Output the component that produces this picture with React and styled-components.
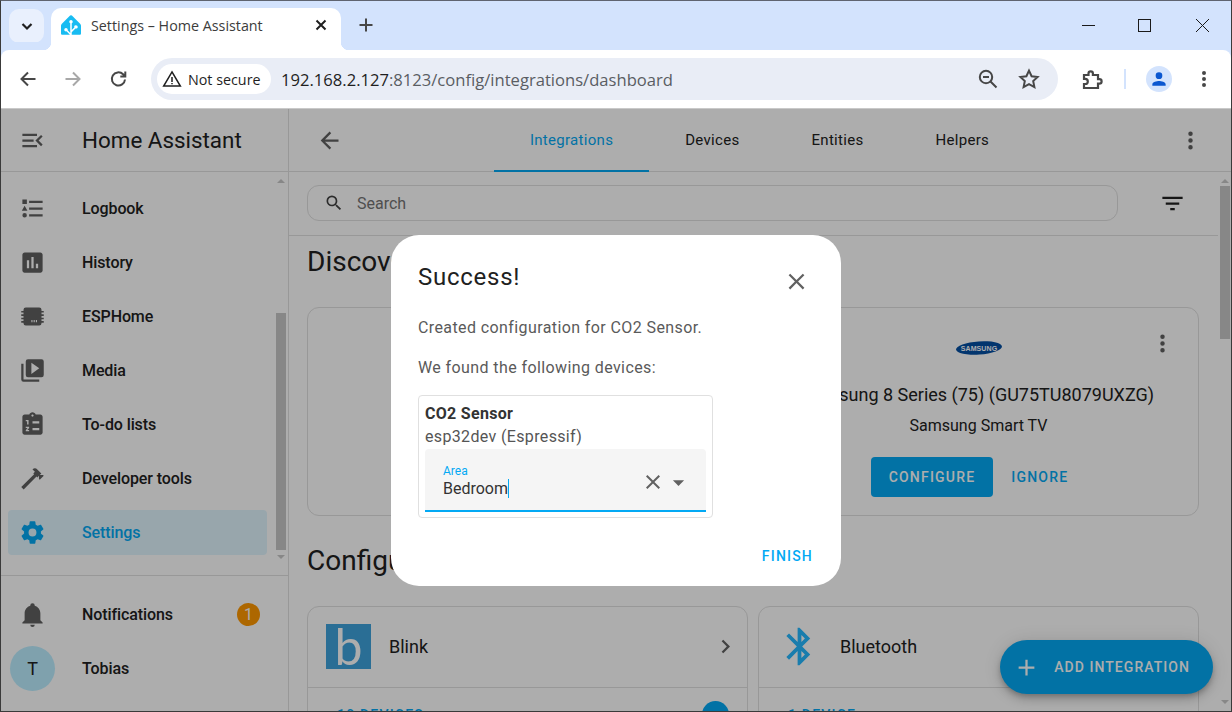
import React from 'react'
import styled, { createGlobalStyle } from 'styled-components'
import { SiHomeassistant } from 'react-icons/si'

const mdi = {
  menuOpen: 'M21,15.61L19.59,17L14.58,12L19.59,7L21,8.39L17.44,12L21,15.61M3,6H16V8H3V6M3,13V11H13V13H3M3,18V16H16V18H3Z',
  logbook: 'M5,9.5L7.5,14H2.5L5,9.5M3,4H7V8H3V4M5,20A2,2 0 0,0 7,18A2,2 0 0,0 5,16A2,2 0 0,0 3,18A2,2 0 0,0 5,20M9,5V7H21V5H9M9,19H21V17H9V19M9,13H21V11H9V13Z',
  history: 'M9 17H7V10H9V17M13 17H11V7H13V17M17 17H15V13H17V17M19 3H5C3.9 3 3 3.9 3 5V19C3 20.1 3.9 21 5 21H19C20.1 21 21 20.1 21 19V5C21 3.9 20.1 3 19 3Z',
  esphome: 'M6 4H18A2 2 0 0 1 20 6V7H22V8.5H20V10H22V11.5H20V13H22V14.5H20V16H22V17.5H20V18A2 2 0 0 1 18 20H6A2 2 0 0 1 4 18V17.5H2V16H4V14.5H2V13H4V11.5H2V10H4V8.5H2V7H4V6A2 2 0 0 1 6 4M11 15V17H12V15H11M13 15V17H14V15H13M15 15V17H16V15H15Z',
  media: 'M22,16V4A2,2 0 0,0 20,2H8A2,2 0 0,0 6,4V16A2,2 0 0,0 8,18H20A2,2 0 0,0 22,16M11,5L18,10L11,15V5M4,6H2V20A2,2 0 0,0 4,22H18V20H4V6Z',
  todo: 'M19 3H14.82C14.4 1.84 13.3 1 12 1S9.6 1.84 9.18 3H5C3.9 3 3 3.9 3 5V19C3 20.1 3.9 21 5 21H19C20.1 21 21 20.1 21 19V5C21 3.9 20.1 3 19 3M12 3C12.55 3 13 3.45 13 4S12.55 5 12 5 11 4.55 11 4 11.45 3 12 3M12 9H18V11H12V9M12 15H18V17H12V15M6 8H8.5V12H7.2V9.2H6V8M6 14H9V15L7.4 16.8H9V18H6V17L7.6 15.2H6V14Z',
  hammer: 'M2 19.63L13.43 8.2L12.72 7.5L14.14 6.07L12 3.89C13.2 2.7 15.09 2.7 16.27 3.89L19.87 7.5L18.45 8.91H21.29L22 9.62L18.45 13.21L17.74 12.5V9.62L16.27 11.04L15.56 10.33L4.13 21.76L2 19.63Z',
  cog: 'M12,15.5A3.5,3.5 0 0,1 8.5,12A3.5,3.5 0 0,1 12,8.5A3.5,3.5 0 0,1 15.5,12A3.5,3.5 0 0,1 12,15.5M19.43,12.97C19.47,12.65 19.5,12.33 19.5,12C19.5,11.67 19.47,11.34 19.43,11L21.54,9.37C21.73,9.22 21.78,8.95 21.66,8.73L19.66,5.27C19.54,5.05 19.27,4.96 19.05,5.05L16.56,6.05C16.04,5.66 15.5,5.32 14.87,5.07L14.5,2.42C14.46,2.18 14.25,2 14,2H10C9.75,2 9.54,2.18 9.5,2.42L9.13,5.07C8.5,5.32 7.96,5.66 7.44,6.05L4.95,5.05C4.73,4.96 4.46,5.05 4.34,5.27L2.34,8.73C2.21,8.95 2.27,9.22 2.46,9.37L4.57,11C4.53,11.34 4.5,11.67 4.5,12C4.5,12.33 4.53,12.65 4.57,12.97L2.46,14.63C2.27,14.78 2.21,15.05 2.34,15.27L4.34,18.73C4.46,18.95 4.73,19.03 4.95,18.95L7.44,17.94C7.96,18.34 8.5,18.68 9.13,18.93L9.5,21.58C9.54,21.82 9.75,22 10,22H14C14.25,22 14.46,21.82 14.5,21.58L14.87,18.93C15.5,18.67 16.04,18.34 16.56,17.94L19.05,18.95C19.27,19.03 19.54,18.95 19.66,18.73L21.66,15.27C21.78,15.05 21.73,14.78 21.54,14.63L19.43,12.97Z',
  bell: 'M21,19V20H3V19L5,17V11C5,7.9 7.03,5.17 10,4.29C10,4.19 10,4.1 10,4A2,2 0 0,1 12,2A2,2 0 0,1 14,4C14,4.1 14,4.19 14,4.29C16.97,5.17 19,7.9 19,11V17L21,19M14,21A2,2 0 0,1 12,23A2,2 0 0,1 10,21',
  back: 'M20,11V13H8L13.5,18.5L12.08,19.92L4.16,12L12.08,4.08L13.5,5.5L8,11H20Z',
  dots: 'M12,16A2,2 0 0,1 14,18A2,2 0 0,1 12,20A2,2 0 0,1 10,18A2,2 0 0,1 12,16M12,10A2,2 0 0,1 14,12A2,2 0 0,1 12,14A2,2 0 0,1 10,12A2,2 0 0,1 12,10M12,4A2,2 0 0,1 14,6A2,2 0 0,1 12,8A2,2 0 0,1 10,6A2,2 0 0,1 12,4Z',
  magnify: 'M9.5,3A6.5,6.5 0 0,1 16,9.5C16,11.11 15.41,12.59 14.44,13.73L14.71,14H15.5L20.5,19L19,20.5L14,15.5V14.71L13.73,14.44C12.59,15.41 11.11,16 9.5,16A6.5,6.5 0 0,1 3,9.5A6.5,6.5 0 0,1 9.5,3M9.5,5C7,5 5,7 5,9.5C5,12 7,14 9.5,14C12,14 14,12 14,9.5C14,7 12,5 9.5,5Z',
  filter: 'M6,13H18V11H6M3,6V8H21V6M10,18H14V16H10V18Z',
  close: 'M19,6.41L17.59,5L12,10.59L6.41,5L5,6.41L10.59,12L5,17.59L6.41,19L12,13.41L17.59,19L19,17.59L13.41,12L19,6.41Z',
  menuDown: 'M7,10L12,15L17,10H7Z',
  chevron: 'M8.59,16.58L13.17,12L8.59,7.41L10,6L16,12L10,18L8.59,16.58Z',
  plus: 'M19,13H13V19H11V13H5V11H11V5H13V11H19V13Z',
  bluetooth: 'M14.88,16.29L13,18.17V14.41M13,5.83L14.88,7.71L13,9.58M17.71,7.71L12,2H11V9.58L6.41,5L5,6.41L10.59,12L5,17.58L6.41,19L11,14.41V22H12L17.71,16.29L13.41,12L17.71,7.71Z',
}

//--Styles
const GlobalStyle = createGlobalStyle`
  html, body {
    margin: 0;
    height: 100%;
    overflow: hidden;
    background: #fff;
  }
  * {
    box-sizing: border-box;
  }
`
const Window = styled.div`
  width: 1232px;
  height: 712px;
  display: flex;
  flex-direction: column;
  overflow: hidden;
  border: 1px solid #3a3a3a;
  border-top-color: #5f6470;
  font-family: Roboto, sans-serif;
  color: #212121;
`
const Svg = styled.svg`
  display: block;
  flex: none;
  width: ${(p) => p.$size || 27}px;
  height: ${(p) => p.$size || 27}px;
  fill: ${(p) => p.$color || '#616161'};
`
const Icon = ({ d, size, color }) => (
  <Svg viewBox="0 0 24 24" $size={size} $color={color}>
    <path d={d} />
  </Svg>
)
const Line = styled.svg`
  display: block;
  flex: none;
  width: ${(p) => p.$size || 24}px;
  height: ${(p) => p.$size || 24}px;
  fill: none;
  stroke: ${(p) => p.$color || '#474747'};
  stroke-width: ${(p) => p.$weight || 2};
`

// browser chrome
const TabStrip = styled.div`
  height: 49px;
  flex: none;
  display: flex;
  align-items: flex-end;
  background: #d3e3fd;
  padding-left: 8px;
`
const TabMenu = styled.div`
  width: 35px;
  height: 34px;
  margin: 0 7px 7px 0;
  border-radius: 10px;
  background: #e9f0fd;
  display: flex;
  align-items: center;
  justify-content: center;
`
const Tab = styled.div`
  position: relative;
  width: 290px;
  height: 42px;
  background: #fff;
  border-radius: 10px 10px 0 0;
  display: flex;
  align-items: center;
  padding: 0 8px 8px 10px;
  &::before,
  &::after {
    content: '';
    position: absolute;
    bottom: 0;
    width: 8px;
    height: 8px;
  }
  &::before {
    left: -8px;
    background: radial-gradient(circle at 0 0, transparent 8px, #fff 8.5px);
  }
  &::after {
    right: -8px;
    background: radial-gradient(circle at 100% 0, transparent 8px, #fff 8.5px);
  }
`
const TabTitle = styled.span`
  flex: 1;
  margin-left: 10px;
  font: 14.3px 'Open Sans', sans-serif;
  color: #3c3c3c;
  white-space: nowrap;
`
const NewTab = styled.div`
  margin: 0 0 13px 13px;
`
const WindowControls = styled.div`
  margin: 0 1px 13px auto;
  display: flex;
`
const WindowControl = styled.div`
  width: 57px;
  display: flex;
  justify-content: center;
`
const ToolBar = styled.div`
  height: 59px;
  flex: none;
  display: flex;
  align-items: center;
  padding: 0 9px;
  background: #fff;
  border-bottom: 1px solid #c9c9c9;
  border-radius: 8px 8px 0 0;
  box-shadow: 0 -8px 0 #d3e3fd;
`
const NavButton = styled.div`
  width: 36px;
  height: 36px;
  flex: none;
  margin-right: ${(p) => p.$gap ?? 9}px;
  margin-left: ${(p) => p.$lead || 0}px;
  display: flex;
  align-items: center;
  justify-content: center;
`
const Omnibox = styled.div`
  width: 907px;
  height: 42px;
  flex: none;
  margin-left: 6px;
  padding: 0 17px 0 6px;
  border-radius: 21px;
  background: #e9edf6;
  display: flex;
  align-items: center;
`
const SecurityChip = styled.div`
  width: 114px;
  height: 30px;
  flex: none;
  border-radius: 15px;
  background: #fff;
  display: flex;
  align-items: center;
  gap: 6px;
  padding-left: 5px;
  font: 14.3px 'Open Sans', sans-serif;
  color: #1f1f1f;
  white-space: nowrap;
`
const Url = styled.div`
  flex: 1;
  margin-left: 10px;
  font: 16.6px 'Open Sans', sans-serif;
  color: #5a5d63;
  white-space: nowrap;
  b {
    font-weight: 400;
    color: #1f1f1f;
  }
`
const OmniIcon = styled.div`
  margin-left: 17px;
`
const Separator = styled.div`
  width: 2px;
  height: 20px;
  flex: none;
  margin: 0 20px 0 14px;
  background: #d3e3fd;
`
const Avatar = styled.div`
  width: 26px;
  height: 26px;
  flex: none;
  margin-right: 14px;
  border-radius: 50%;
  background: #d3e3fd;
  display: flex;
  align-items: center;
  justify-content: center;
`

// home assistant app
const AppArea = styled.div`
  position: relative;
  flex: 1;
  min-height: 0;
  display: flex;
  background: #fff;
`
const Sidebar = styled.aside`
  width: 288px;
  flex: none;
  display: flex;
  flex-direction: column;
  border-right: 1px solid #e0e0e0;
`
const SidebarHeader = styled.div`
  height: 63px;
  flex: none;
  display: flex;
  align-items: center;
  gap: 36px;
  padding-left: 18px;
  font-size: 22.4px;
  border-bottom: 1px solid #e0e0e0;
`
const SidebarMiddle = styled.div`
  height: 404px;
  flex: none;
  display: flex;
  border-bottom: 1px solid #e0e0e0;
`
const NavList = styled.nav`
  flex: 1;
  display: flex;
  flex-direction: column;
  gap: 9px;
  padding: 14px 0 0 7px;
`
const NavItem = styled.div`
  width: 259px;
  height: 45px;
  flex: none;
  display: flex;
  align-items: center;
  gap: 36px;
  padding: 0 7px 1px 11px;
  border-radius: 4px;
  font-size: 16px;
  font-weight: 500;
  letter-spacing: -0.1px;
  color: ${(p) => (p.$active ? '#03a9f4' : '#212121')};
  background: ${(p) => (p.$active ? 'rgba(3, 169, 244, 0.12)' : 'transparent')};
`
const SidebarBottom = styled.div`
  display: flex;
  flex-direction: column;
  gap: 9px;
  padding: 16px 0 0 7px;
`
const UserItem = styled(NavItem)`
  gap: 27px;
  padding-left: 2px;
`
const Badge = styled.span`
  margin-left: auto;
  width: 23px;
  height: 23px;
  border-radius: 50%;
  background: #ff9800;
  color: #fff;
  font-size: 16px;
  font-weight: 400;
  display: flex;
  align-items: center;
  justify-content: center;
`
const UserBadge = styled.div`
  width: 45px;
  height: 45px;
  border-radius: 50%;
  background: #bceeff;
  font-size: 18px;
  font-weight: 400;
  display: flex;
  align-items: center;
  justify-content: center;
`
const ScrollTrack = styled.div`
  width: ${(p) => p.$width}px;
  flex: none;
  display: flex;
  flex-direction: column;
  align-items: center;
  padding: 7px ${(p) => p.$right || 0}px ${(p) => p.$bottom || 7}px 0;
`
const ArrowUp = styled.div`
  width: 0;
  height: 0;
  border: 4px solid transparent;
  border-top: 0;
  border-bottom: 4px solid #c8c8c8;
`
const ArrowDown = styled.div`
  width: 0;
  height: 0;
  margin-top: auto;
  border: 4px solid transparent;
  border-bottom: 0;
  border-top: 4px solid #c8c8c8;
`
const ScrollThumb = styled.div`
  width: 10px;
  height: ${(p) => p.$height}px;
  margin-top: ${(p) => p.$top}px;
  background: #c8c8c8;
`
const Main = styled.main`
  flex: 1;
  min-width: 0;
  position: relative;
  display: flex;
  flex-direction: column;
`
const MainToolbar = styled.div`
  height: 63px;
  flex: none;
  display: grid;
  grid-template-columns: 1fr auto 1fr;
  align-items: center;
  padding: 0 28px 0 27px;
  border-bottom: 1px solid #e0e0e0;
`
const Tabs = styled.div`
  display: flex;
  align-self: stretch;
  margin-bottom: -1px;
`
const PageTab = styled.div`
  padding: 0 36px;
  display: flex;
  align-items: center;
  font-size: 15px;
  font-weight: 400;
  letter-spacing: 0.3px;
  color: ${(p) => (p.$active ? '#03a9f4' : '#212121')};
  border-bottom: 2px solid ${(p) => (p.$active ? '#03a9f4' : 'transparent')};
`
const EndSlot = styled.div`
  justify-self: end;
  margin-right: -1px;
`
const MainBody = styled.div`
  flex: 1;
  min-height: 0;
  display: flex;
`
const Scroller = styled.div`
  flex: 1;
  min-width: 0;
  overflow: hidden;
`
const SearchRow = styled.div`
  height: 64px;
  display: flex;
  align-items: center;
  padding: 0 0 1px 18px;
  border-bottom: 1px solid #e0e0e0;
`
const SearchBox = styled.div`
  width: 811px;
  height: 36px;
  display: flex;
  align-items: center;
  gap: 13px;
  padding-left: 16px;
  border: 1px solid #e0e0e0;
  border-radius: 12px;
  font-size: 16px;
  color: #757575;
`
const FilterButton = styled.div`
  margin-left: 41px;
`
const Content = styled.div`
  padding: 8px 19px 0 18px;
`
const SectionTitle = styled.h1`
  margin: 0 0 27px;
  font-size: 28px;
  line-height: 36px;
  font-weight: 400;
`
const CardGrid = styled.div`
  display: grid;
  grid-template-columns: 441px 441px;
  gap: 10px;
  margin-bottom: 27px;
`
const Card = styled.div`
  position: relative;
  border: 1px solid #e0e0e0;
  border-radius: 12px;
  background: #fff;
`
const DiscoveryCard = styled(Card)`
  height: 209px;
  display: flex;
  flex-direction: column;
  align-items: center;
  padding-top: 32px;
`
const CardMenu = styled.div`
  position: absolute;
  top: 22px;
  right: 22px;
`
const SamsungLogo = styled.svg`
  display: block;
  width: 46px;
  height: 16px;
  text {
    font: 700 7px 'Liberation Sans', sans-serif;
    fill: #fff;
    letter-spacing: 0.1px;
  }
`
const DeviceTitle = styled.div`
  margin-top: 27px;
  font-size: 18px;
  line-height: 24px;
  white-space: nowrap;
`
const DeviceSub = styled.div`
  margin-top: 7px;
  font-size: 16px;
  line-height: 24px;
`
const CardActions = styled.div`
  display: flex;
  margin-top: 19px;
`
const FilledButton = styled.div`
  height: 40px;
  padding: 0 18px;
  display: flex;
  align-items: center;
  border-radius: 4px;
  background: #03a9f4;
  color: #fff;
  font-size: 14px;
  font-weight: 500;
  letter-spacing: 1.2px;
`
const TextButton = styled(FilledButton)`
  background: none;
  color: #03a9f4;
`
const EntryHeader = styled.div`
  height: 81px;
  display: flex;
  align-items: center;
  gap: 18px;
  padding: 0 8px 1px 18px;
  border-bottom: 1px solid #e0e0e0;
  font-size: 18px;
`
const BlinkLogo = styled.div`
  width: 45px;
  height: 45px;
  flex: none;
  background: #3fa2dc;
  color: #fff;
  display: flex;
  align-items: center;
  justify-content: center;
  font: 50px/45px Lato, sans-serif;
`
const EntryName = styled.div`
  flex: 1;
`
const EntryFooter = styled.div`
  display: flex;
  align-items: flex-start;
  padding: 17px 18px 0 29px;
  color: #03a9f4;
  font-size: 14px;
  font-weight: 500;
  letter-spacing: 1.2px;
  line-height: 20px;
  height: 60px;
`
const CountBadge = styled.div`
  margin: -4px 0 0 auto;
  width: 27px;
  height: 27px;
  border-radius: 50%;
  background: #03a9f4;
`
const Fab = styled.div`
  position: absolute;
  right: 18px;
  bottom: 17px;
  height: 54px;
  display: flex;
  align-items: center;
  gap: 14px;
  padding: 0 23px 0 13px;
  border-radius: 27px;
  background: #03a9f4;
  color: #fff;
  font-size: 14px;
  font-weight: 500;
  letter-spacing: 1.05px;
  box-shadow: 0 3px 5px -1px rgba(0, 0, 0, 0.2), 0 6px 10px 0 rgba(0, 0, 0, 0.14), 0 1px 18px 0 rgba(0, 0, 0, 0.12);
`

// dialog
const Scrim = styled.div`
  position: absolute;
  inset: 0;
  background: rgba(0, 0, 0, 0.32);
  display: flex;
  align-items: center;
  justify-content: center;
`
const Dialog = styled.div`
  width: 450px;
  height: 351px;
  padding: 26px 28px 0 27px;
  border-radius: 28px;
  background: #fff;
`
const DialogHead = styled.div`
  height: 32px;
  display: flex;
  justify-content: space-between;
  align-items: flex-start;
  padding-right: 3px;
`
const DialogTitle = styled.h2`
  margin: 0;
  font-size: 24px;
  line-height: 32px;
  font-weight: 400;
  letter-spacing: 0.75px;
`
const DialogClose = styled.div`
  margin-top: 7px;
`
const DialogText = styled.p`
  margin: ${(p) => p.$top}px 0 0;
  font-size: 16px;
  line-height: 20px;
  letter-spacing: 0.4px;
  color: #5a5a5a;
`
const DeviceBox = styled.div`
  width: 295px;
  height: 123px;
  margin-top: 17px;
  padding: 6px 6px 5px;
  border: 1px solid #e0e0e0;
  border-radius: 4px;
`
const DeviceName = styled.div`
  font-size: 16px;
  font-weight: 700;
  line-height: 24px;
  letter-spacing: 0.3px;
  color: #333;
`
const DeviceModel = styled.div`
  margin-bottom: 2px;
  font-size: 16px;
  line-height: 21px;
  letter-spacing: 0.35px;
  color: #555;
`
const AreaField = styled.div`
  height: 63px;
  display: flex;
  padding: 0 14px 0 18px;
  background: #f5f5f5;
  border-radius: 4px 4px 0 0;
  border-bottom: 2px solid #03a9f4;
`
const AreaText = styled.div`
  flex: 1;
  padding-top: 15px;
`
const AreaLabel = styled.div`
  font-size: 12px;
  line-height: 14px;
  color: #03a9f4;
`
const AreaValue = styled.div`
  font-size: 16px;
  line-height: 20px;
  margin-top: 1px;
  color: #333;
  span {
    border-right: 1px solid #03a9f4;
  }
`
const AreaIcons = styled.div`
  display: flex;
  align-items: center;
  height: 27px;
  margin-top: 20px;
`
const DialogActions = styled.div`
  height: 36px;
  margin-top: 20px;
  display: flex;
  align-items: center;
  justify-content: flex-end;
  font-size: 14px;
  font-weight: 500;
  letter-spacing: 1.2px;
  color: #03a9f4;
`

const navItems = [
  ['Logbook', mdi.logbook],
  ['History', mdi.history],
  ['ESPHome', mdi.esphome],
  ['Media', mdi.media],
  ['To-do lists', mdi.todo],
  ['Developer tools', mdi.hammer],
]

const ChromeBar = () => (
  <>
    <TabStrip>
      <TabMenu>
        <Line viewBox="0 0 24 24" $color="#1f1f1f" $weight={2.2}>
          <path d="M7.5 10l4.5 4.5 4.5-4.5" />
        </Line>
      </TabMenu>
      <Tab>
        <SiHomeassistant size={20} color="#18bcf2" />
        <TabTitle>Settings – Home Assistant</TabTitle>
        <Line viewBox="0 0 24 24" $color="#1f1f1f" $weight={2}>
          <path d="M7.5 7.5l9 9M16.5 7.5l-9 9" />
        </Line>
      </Tab>
      <NewTab>
        <Line viewBox="0 0 24 24" $color="#474747" $weight={2}>
          <path d="M12 5.5v13M5.5 12h13" />
        </Line>
      </NewTab>
      <WindowControls>
        <WindowControl>
          <Line viewBox="0 0 24 24" $color="#1a1a1a" $weight={1}>
            <path d="M6 12.5h13" />
          </Line>
        </WindowControl>
        <WindowControl>
          <Line viewBox="0 0 24 24" $color="#1a1a1a" $weight={1}>
            <rect x="5.5" y="6.5" width="12" height="12" />
          </Line>
        </WindowControl>
        <WindowControl>
          <Line viewBox="0 0 24 24" $color="#1a1a1a" $weight={1}>
            <path d="M6 6l13 13M19 6L6 19" />
          </Line>
        </WindowControl>
      </WindowControls>
    </TabStrip>
    <ToolBar>
      <NavButton>
        <Line viewBox="0 0 24 24">
          <path d="M19.5 12H6M12 5.5L5.5 12l6.5 6.5" />
        </Line>
      </NavButton>
      <NavButton>
        <Line viewBox="0 0 24 24" $color="#a8a8a8">
          <path d="M4.5 12H18M12 5.5l6.5 6.5-6.5 6.5" />
        </Line>
      </NavButton>
      <NavButton>
        <Line viewBox="0 0 24 24">
          <path d="M19 12.5A6.6 6.6 0 1 1 17.1 7.3L19 9.2M19.3 4.6v5h-5" />
        </Line>
      </NavButton>
      <Omnibox>
        <SecurityChip>
          <Line viewBox="0 0 24 24" $size={20} $color="#1f1f1f" $weight={1.8}>
            <path d="M12 3.5L22 20.5H2L12 3.5ZM12 9.5v6M12 16.8v1.6" />
          </Line>
          Not secure
        </SecurityChip>
        <Url>
          <b>192.168.2.127</b>:8123/config/integrations/dashboard
        </Url>
        <OmniIcon>
          <Line viewBox="0 0 24 24" $weight={2}>
            <circle cx="10" cy="10" r="6.2" />
            <path d="M7 10h6M14.5 14.5l6 6" />
          </Line>
        </OmniIcon>
        <OmniIcon>
          <Line viewBox="0 0 24 24" $weight={2}>
            <path d="M12 3.6l2.6 5.6 6 .7-4.4 4.2 1.2 6L12 17.1l-5.4 3 1.2-6-4.4-4.2 6-.7L12 3.6Z" />
          </Line>
        </OmniIcon>
      </Omnibox>
      <NavButton $gap={0} $lead={16}>
        <Line viewBox="0 0 24 24" $weight={2.2}>
          <path d="M4 8h4.5V6.5a2.2 2.2 0 0 1 4.4 0V8H18v4.2h1.4a2.2 2.2 0 0 1 0 4.4H18V21H4v-4h1.2a2.6 2.6 0 0 0 0-5.2H4V8Z" />
        </Line>
      </NavButton>
      <Separator />
      <Avatar>
        <Svg viewBox="0 0 24 24" $size={20} $color="#0b57d0">
          <path d="M12 4a4 4 0 1 1 0 8 4 4 0 0 1 0-8ZM4 20v-1.5C4 15.8 9.3 14.5 12 14.5s8 1.3 8 4V20H4Z" />
        </Svg>
      </Avatar>
      <NavButton $gap={0}>
        <Icon d={mdi.dots} size={24} color="#474747" />
      </NavButton>
    </ToolBar>
  </>
)

const SidebarPanel = () => (
  <Sidebar>
    <SidebarHeader>
      <Icon d={mdi.menuOpen} />
      Home Assistant
    </SidebarHeader>
    <SidebarMiddle>
      <NavList>
        {navItems.map(([label, d]) => (
          <NavItem key={label}>
            <Icon d={d} />
            {label}
          </NavItem>
        ))}
        <NavItem $active>
          <Icon d={mdi.cog} color="#03a9f4" />
          Settings
        </NavItem>
      </NavList>
      <ScrollTrack $width={12} $right={2} $bottom={16}>
        <ArrowUp />
        <ScrollThumb $top={130} $height={237} />
        <ArrowDown />
      </ScrollTrack>
    </SidebarMiddle>
    <SidebarBottom>
      <NavItem>
        <Icon d={mdi.bell} />
        Notifications
        <Badge>1</Badge>
      </NavItem>
      <UserItem>
        <UserBadge>T</UserBadge>
        Tobias
      </UserItem>
    </SidebarBottom>
  </Sidebar>
)

const MainPanel = () => (
  <Main>
    <MainToolbar>
      <Icon d={mdi.back} />
      <Tabs>
        <PageTab $active>Integrations</PageTab>
        <PageTab>Devices</PageTab>
        <PageTab>Entities</PageTab>
        <PageTab>Helpers</PageTab>
      </Tabs>
      <EndSlot>
        <Icon d={mdi.dots} />
      </EndSlot>
    </MainToolbar>
    <MainBody>
      <Scroller>
        <SearchRow>
          <SearchBox>
            <Icon d={mdi.magnify} size={20} color="#424242" />
            Search
          </SearchBox>
          <FilterButton>
            <Icon d={mdi.filter} color="#212121" />
          </FilterButton>
        </SearchRow>
        <Content>
          <SectionTitle>Discovered</SectionTitle>
          <CardGrid>
            <DiscoveryCard />
            <DiscoveryCard>
              <CardMenu>
                <Icon d={mdi.dots} />
              </CardMenu>
              <SamsungLogo viewBox="0 0 46 16">
                <ellipse cx="23" cy="8" rx="23" ry="6.6" transform="rotate(-4 23 8)" fill="#034ea2" />
                <text x="23" y="10.5" textAnchor="middle">
                  SAMSUNG
                </text>
              </SamsungLogo>
              <DeviceTitle>Samsung 8 Series (75) (GU75TU8079UXZG)</DeviceTitle>
              <DeviceSub>Samsung Smart TV</DeviceSub>
              <CardActions>
                <FilledButton>CONFIGURE</FilledButton>
                <TextButton>IGNORE</TextButton>
              </CardActions>
            </DiscoveryCard>
          </CardGrid>
          <SectionTitle>Configured</SectionTitle>
          <CardGrid>
            <Card>
              <EntryHeader>
                <BlinkLogo>b</BlinkLogo>
                <EntryName>Blink</EntryName>
                <Icon d={mdi.chevron} />
              </EntryHeader>
              <EntryFooter>
                10 DEVICES
                <CountBadge />
              </EntryFooter>
            </Card>
            <Card>
              <EntryHeader>
                <Icon d={mdi.bluetooth} size={45} color="#25b8ff" />
                <EntryName>Bluetooth</EntryName>
              </EntryHeader>
              <EntryFooter>1 DEVICE</EntryFooter>
            </Card>
          </CardGrid>
        </Content>
      </Scroller>
      <ScrollTrack $width={13}>
        <ArrowUp />
        <ScrollThumb $top={3} $height={153} />
        <ArrowDown />
      </ScrollTrack>
    </MainBody>
    <Fab>
      <Icon d={mdi.plus} color="#fff" />
      ADD INTEGRATION
    </Fab>
  </Main>
)

const SuccessDialog = () => (
  <Scrim>
    <Dialog>
      <DialogHead>
        <DialogTitle>Success!</DialogTitle>
        <DialogClose>
          <Icon d={mdi.close} color="#616161" />
        </DialogClose>
      </DialogHead>
      <DialogText $top={25}>Created configuration for CO2 Sensor.</DialogText>
      <DialogText $top={20}>We found the following devices:</DialogText>
      <DeviceBox>
        <DeviceName>CO2 Sensor</DeviceName>
        <DeviceModel>esp32dev (Espressif)</DeviceModel>
        <AreaField>
          <AreaText>
            <AreaLabel>Area</AreaLabel>
            <AreaValue>
              <span>Bedroom</span>
            </AreaValue>
          </AreaText>
          <AreaIcons>
            <Icon d={mdi.close} size={24} color="#616161" />
            <Icon d={mdi.menuDown} color="#616161" />
          </AreaIcons>
        </AreaField>
      </DeviceBox>
      <DialogActions>FINISH</DialogActions>
    </Dialog>
  </Scrim>
)

export default function App() {
  return (
    <Window>
      <GlobalStyle />
      <ChromeBar />
      <AppArea>
        <SidebarPanel />
        <MainPanel />
        <SuccessDialog />
      </AppArea>
    </Window>
  )
}
